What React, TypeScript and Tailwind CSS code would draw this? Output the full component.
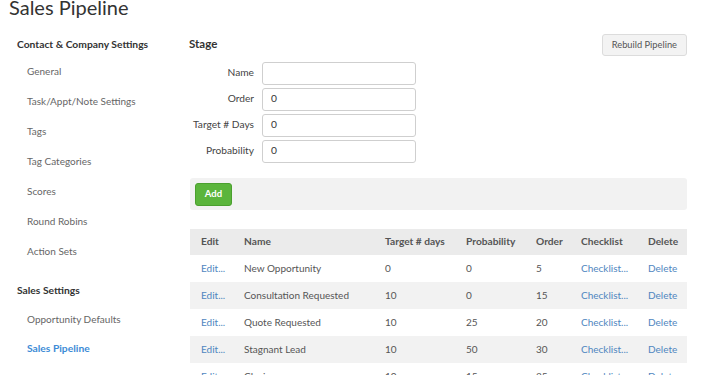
const font = "font-['Lato','Open_Sans',sans-serif]";

const contactItems = [
  "General",
  "Task/Appt/Note Settings",
  "Tags",
  "Tag Categories",
  "Scores",
  "Round Robins",
  "Action Sets",
];

const stages = [
  { name: "New Opportunity", days: 0, prob: 0, order: 5 },
  { name: "Consultation Requested", days: 10, prob: 0, order: 15 },
  { name: "Quote Requested", days: 10, prob: 25, order: 20 },
  { name: "Stagnant Lead", days: 10, prob: 50, order: 30 },
  { name: "Closing", days: 10, prob: 15, order: 35 },
];

const cols = "grid grid-cols-[43px_141px_81px_70px_45px_67px_49px]";

const Field = ({ label, value }: { label: string; value: string }) => (
  <div className="flex items-center h-[26px]">
    <div className="w-[73px] text-right pr-2 text-[10.2px] text-[#444] whitespace-nowrap">{label}</div>
    <div className="w-[154px] h-[23px] border border-[#cfcfcf] rounded-[3px] bg-white flex items-center pl-[8px] text-[10.2px] text-[#333]">
      {value}
    </div>
  </div>
);

export default function App() {
  return (
    <div className={`${font} w-[710px] h-[375px] overflow-hidden bg-white`}>
      <h1 className="text-[20px] leading-[24px] text-[#333] pl-[9px] -mt-[5px]">Sales Pipeline</h1>
      <div className="flex">
        <aside className="w-[190px] pl-[17px] pt-[14px]">
          <div className="h-[24px] flex items-center text-[10.3px] font-bold text-[#333] whitespace-nowrap">
            Contact &amp; Company Settings
          </div>
          <div className="-mt-[1px]">
            {contactItems.map((i) => (
              <div key={i} className="h-[30px] flex items-center pl-[10px] text-[10px] text-[#666]">
                {i}
              </div>
            ))}
          </div>
          <div className="mt-[10px] h-[30px] flex items-center text-[10.3px] font-bold text-[#333]">
            Sales Settings
          </div>
          <div className="-mt-[2px] h-[30px] flex items-center pl-[10px] text-[10px] text-[#666]">
            Opportunity Defaults
          </div>
          <div className="h-[30px] flex items-center pl-[10px] text-[10.3px] font-bold text-[#3d8bd6]">
            Sales Pipeline
          </div>
          <div className="h-[30px] flex items-center pl-[10px] text-[10px] text-[#666]">
            Pipeline Automation
          </div>
        </aside>
        <main className="w-[497px] pt-[13px]">
          <div className="flex justify-between items-start">
            <div className="pt-[3px] text-[11.5px] font-bold text-[#333] -ml-[1px]">Stage</div>
            <button className="mt-[2px] h-[22px] px-[9px] bg-[#f3f3f3] border border-[#dcdcdc] rounded-[3px] text-[9.3px] text-[#555]">
              Rebuild Pipeline
            </button>
          </div>
          <div className="mt-[4px] -ml-[1px]">
            <Field label="Name" value="" />
            <Field label="Order" value="0" />
            <Field label="Target # Days" value="0" />
            <Field label="Probability" value="0" />
          </div>
          <div className="mt-[14px] h-[32px] bg-[#f2f2f2] rounded-[3px] flex items-center pl-[5px]">
            <button className="h-[23px] w-[37px] rounded-[3px] bg-[#5bb53c] border border-[#4ba02f] text-white text-[9.5px] font-bold">
              Add
            </button>
          </div>
          <div className="mt-[19px]">
            <div className={`${cols} h-[26px] items-center bg-[#ebebeb] text-[10.2px] font-bold text-[#555]`}>
              {["Edit", "Name", "Target # days", "Probability", "Order", "Checklist", "Delete"].map((h) => (
                <div key={h} className="pl-[11px] whitespace-nowrap">{h}</div>
              ))}
            </div>
            {stages.map((s, i) => (
              <div
                key={s.name}
                className={`${cols} h-[27px] items-center text-[10px] text-[#555] ${i % 2 === 1 ? "bg-[#f2f2f2]" : "bg-white"}`}
              >
                <div className="pl-[11px] text-[#4f86c0]">Edit...</div>
                <div className="pl-[11px] whitespace-nowrap">{s.name}</div>
                <div className="pl-[11px]">{s.days}</div>
                <div className="pl-[11px]">{s.prob}</div>
                <div className="pl-[11px]">{s.order}</div>
                <div className="pl-[11px] text-[#4f86c0] whitespace-nowrap">Checklist...</div>
                <div className="pl-[11px] text-[#4f86c0]">Delete</div>
              </div>
            ))}
          </div>
        </main>
      </div>
    </div>
  );
}
